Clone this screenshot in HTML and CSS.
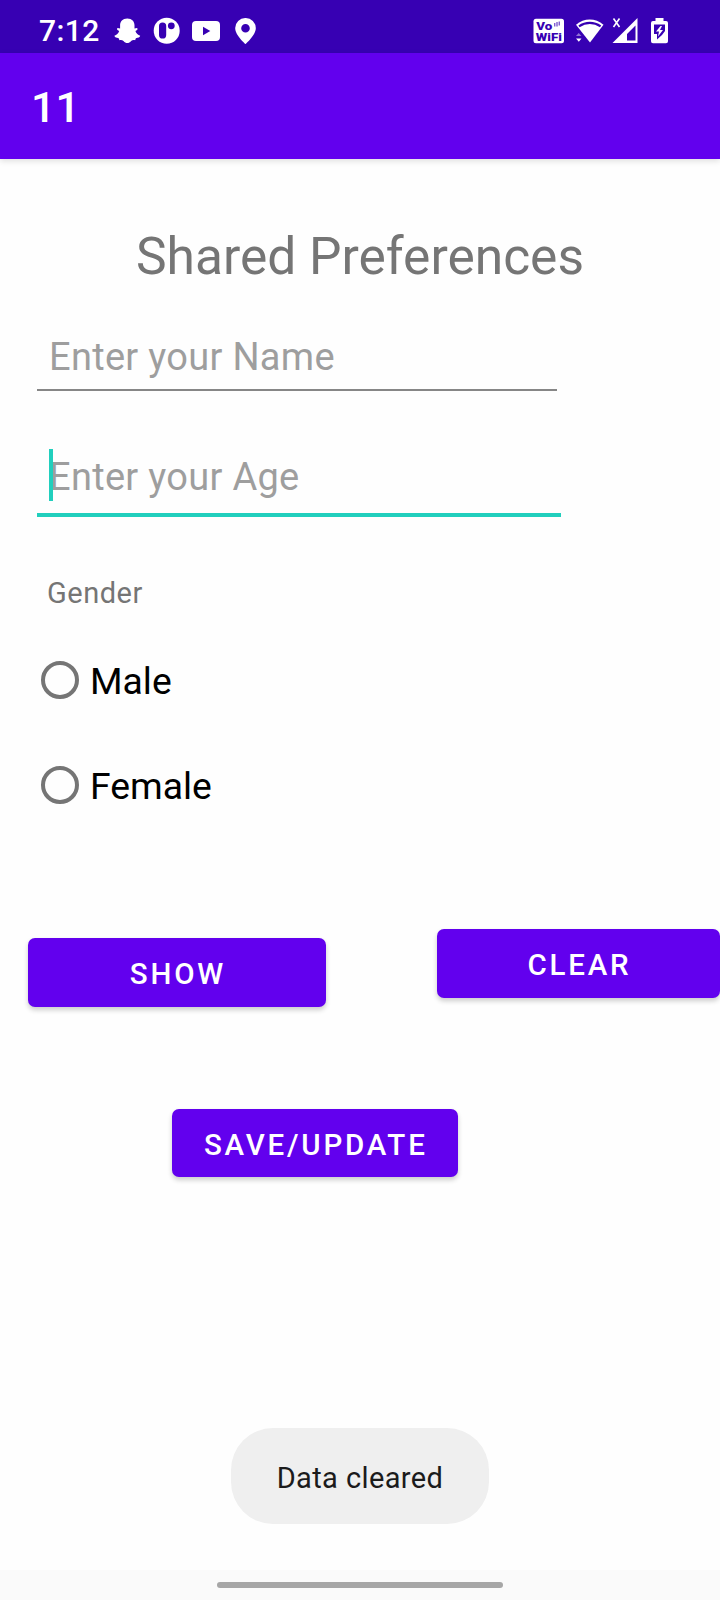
FILE: index.html
```html
<!DOCTYPE html>
<html lang="en">
<head>
<meta charset="utf-8">
<title>Shared Preferences</title>
<link rel="stylesheet" href="styles.css">
</head>
<body>
<div class="screen">
  <header class="status">
    <span class="time">7:12</span>
    <svg class="status-left" width="144" height="28" viewBox="114 17 144 28" fill="#fff">
      <path d="M127.300 18.500c4.700 0 7.200 3 7.200 7v3l2.500-.6c1.200.8.6 2-1.600 3 .9 2.400 2.500 4 4.800 4.900-.3 1.600-2 2-4.300 2.400l-.8 2c-1.600-.3-2.800-.2-4 .9-1.200 1.500-2.400 2-3.800 2s-2.600-.5-3.800-2c-1.200-1.100-2.400-1.200-4-.9l-.8-2c-2.300-.4-4-.8-4.300-2.400 2.300-.9 3.900-2.500 4.800-4.900-2.200-1-2.800-2.200-1.600-3l2.500.6v-3c0-4 2.500-7 7.200-7z"/>
      <circle cx="166.700" cy="30.800" r="13"/>
      <rect x="159" y="22.500" width="7.200" height="16" rx="3.600" fill="#3700b3"/>
      <circle cx="171.300" cy="25.800" r="3.400" fill="#3700b3"/>
      <rect x="192" y="21" width="28" height="20" rx="4"/>
      <path d="M203 26.800v8.400l7.300-4.200z" fill="#3700b3"/>
      <path fill-rule="evenodd" d="M245.500 18a10 10 0 0 0-10.300 10.200c0 7 10.300 15.800 10.300 15.800s10.300-8.800 10.300-15.800A10 10 0 0 0 245.500 18zm0 6a4.300 4.300 0 1 1 0 8.600 4.300 4.300 0 0 1 0-8.600z"/>
    </svg>
    <svg class="status-right" width="138" height="28" viewBox="532 17 138 28" fill="#fff">
      <rect x="533.500" y="18.800" width="30.500" height="24.400" rx="2.500"/>
      <text class="vowifi" fill="#3700b3"><tspan x="536.300" y="29.500" textLength="16" lengthAdjust="spacingAndGlyphs">Vo</tspan><tspan x="535.800" y="40.500" textLength="26" lengthAdjust="spacingAndGlyphs">WiFi</tspan></text>
      <path d="M554.800 23v3.500M557 22v4.500M559.200 21.500v4" stroke="#3700b3" stroke-width=".9"/>
      <path d="M576 24.800c8-7 19.500-7 27.500 0L590 42.500z"/>
      <path d="M579 26.300c6.600-4.600 15-4.600 21.600 0" fill="none" stroke="#3700b3" stroke-width="2.200"/>
      <path d="M576 36l2.700-3 2.700 3z" opacity=".45"/>
      <path d="M576 38.500h5.500l-2.700 3.200z"/>
      <path d="M613.500 18.500l6 8.500M619.500 18.500l-6 8.500" fill="none" stroke="#fff" stroke-width="1.600"/>
      <path fill-rule="evenodd" d="M637.500 18v25H612.500zM635.500 25.500l-8.500 8.500V40.500h8.500z"/>
      <path fill-rule="evenodd" d="M655.500 18h8v3h2.500a2 2 0 0 1 2 2v18.200a2 2 0 0 1-2 2h-13a2 2 0 0 1-2-2V23a2 2 0 0 1 2-2h2.500zM654 24.500V34h3v5.500l5-4.500 3-4V24.500z"/>
      <path d="M660.500 26l-4.500 5.500h3l-1 5 5-6.500h-3l2-4z"/>
    </svg>
  </header>
  <div class="appbar"><span>11</span></div>
  <main class="content">
    <h1 class="title">Shared Preferences</h1>
    <div class="field field-name">Enter your Name</div>
    <div class="field field-age"><i class="caret"></i>Enter your Age</div>
    <div class="label">Gender</div>
    <div class="radio"><i class="ring"></i><span>Male</span></div>
    <div class="radio"><i class="ring"></i><span>Female</span></div>
    <div class="actions">
      <button class="btn show">SHOW</button>
      <button class="btn clear">CLEAR</button>
    </div>
    <button class="btn save">SAVE/UPDATE</button>
    <div class="toast">Data cleared</div>
  </main>
  <footer class="nav"><i class="handle"></i></footer>
</div>
</body>
</html>
```
FILE: styles.css
```css
* { box-sizing: border-box; }
body { margin: 0; background: #fefefe; font-family: Roboto, sans-serif; }
.screen { width: 720px; height: 1600px; display: flex; flex-direction: column; overflow: hidden; }
.status { height: 53px; background: #3700b3; color: #fff; display: flex; align-items: flex-start; padding: 17px 50px 0 39px; }
.time { font-size: 30px; line-height: 27px; width: 75px; font-weight: 500; letter-spacing: .4px; }
.status-right { margin-left: auto; }
.vowifi { font-size: 11px; font-weight: 900; }
.appbar { height: 105.500px; background: #6200ee; color: #fff; padding: 29px 0 0 31px; font-size: 43px; font-weight: 500; line-height: 50px; box-shadow: 0 2px 6px rgba(0,0,0,.13); flex: none; }
.content { flex: 1; display: flex; flex-direction: column; align-items: flex-start; padding-top: 68.500px; }
.title { margin: 0; align-self: center; font-size: 51.500px; line-height: 60px; font-weight: 400; color: #757575; white-space: nowrap; }
.field { font-size: 38px; line-height: 50px; letter-spacing: .3px; color: #9e9e9e; padding-left: 12px; margin-left: 37px; }
.field-name { margin-top: 45px; width: 520px; height: 59px; border-bottom: 2px solid #868686; }
.field-age { position: relative; margin-top: 61px; width: 524px; height: 65px; border-bottom: 4px solid #21cfbd; }
.caret { position: absolute; left: 12px; top: -3px; width: 4px; height: 52px; background: #21cfbd; }
.label { font-size: 29px; line-height: 40px; letter-spacing: .5px; color: #757575; margin: 56px 0 0 47px; }
.radio { height: 105px; display: flex; align-items: center; padding-left: 41px; gap: 11px; font-size: 37.300px; color: #000; }
.label + .radio { margin-top: 14px; }
.radio span { line-height: 50px; padding-top: 3px; }
.ring { width: 38px; height: 38px; border: 4px solid #757575; border-radius: 50%; }
.actions { display: flex; justify-content: space-between; align-items: flex-start; width: 720px; padding-left: 28px; margin-top: 92px; }
.btn { font: 500 29.500px/68px Roboto, sans-serif; height: 68.500px; padding: 2px 0 0 2px; border: 0; border-radius: 7px; background: #6200ee; color: #fff; letter-spacing: 2.800px; box-shadow: 0 3px 5px rgba(0,0,0,.2); }
.show { width: 298px; margin-top: 9px; }
.clear { width: 283px; }
.save { width: 285.500px; margin: 102px 0 0 172px; }
.toast { align-self: center; margin-top: 251px; width: 258px; height: 96px; border-radius: 42px; background: #efefef; color: #1b1b1b; font-size: 29px; line-height: 100px; letter-spacing: .4px; text-align: center; }
.nav { height: 30px; background: #fafafa; display: flex; justify-content: center; padding-top: 12px; flex: none; }
.handle { width: 286px; height: 6px; border-radius: 3px; background: #a6a6a6; }
```
